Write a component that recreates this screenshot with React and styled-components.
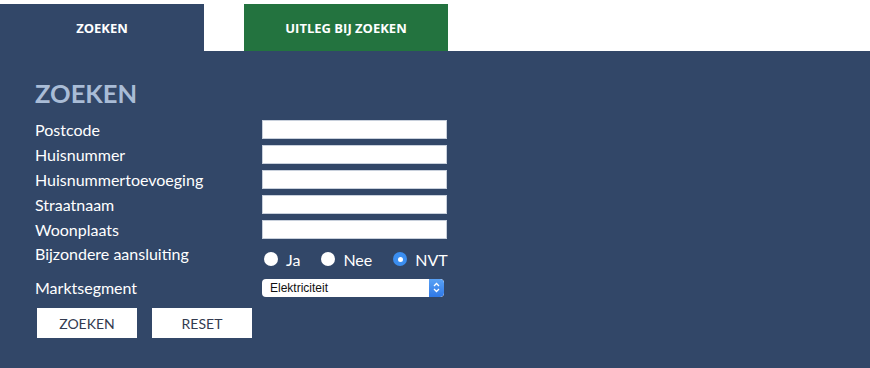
import React from "react";
import styled, { createGlobalStyle } from "styled-components";

const Global = createGlobalStyle`
  body {
    margin: 0;
    background: #fff;
    font-family: "Lato", "Open Sans", "Liberation Sans", sans-serif;
  }
`;

const Tabs = styled.div`
  display: flex;
  gap: 40px;
  margin-top: 4px;
`;

const Tab = styled.div`
  width: 204px;
  height: 47px;
  display: flex;
  align-items: center;
  justify-content: center;
  background: ${(p) => (p.active ? "#324768" : "#23733f")};
  color: #fff;
  font-family: "Open Sans", sans-serif;
  font-size: 13px;
  font-weight: 700;
`;

const Panel = styled.div`
  background: #324768;
  height: 317px;
  padding: 26px 0 0 35px;
  box-sizing: border-box;
`;

const Heading = styled.h1`
  margin: 0 0 8px;
  color: #a9bcd6;
  font-size: 25.5px;
  font-weight: 700;
  line-height: 32px;
`;

const Form = styled.div`
  display: grid;
  grid-template-columns: 227px 185px;
  grid-template-rows: repeat(5, 25px) 33px 25px;
  align-items: center;
  color: #fff;
  font-size: 16px;
`;

const Label = styled.div`
  line-height: 18px;
  align-self: ${(p) => (p.top ? "start" : "center")};
  margin-top: ${(p) => (p.top ? "3px" : "0")};
`;

const Input = styled.input`
  width: 185px;
  height: 19px;
  box-sizing: border-box;
  border: 1px solid #c8d0dc;
  background: #fff;
  padding: 0;
  margin: 0;
`;

const Radios = styled.div`
  display: flex;
  align-items: center;
  gap: 21px;
  padding: 1px 0 0 2px;
`;

const RadioItem = styled.label`
  display: flex;
  align-items: center;
  gap: 8px;
`;

const Dot = styled.span`
  width: 14px;
  height: 14px;
  border-radius: 50%;
  box-sizing: border-box;
  background: ${(p) => (p.checked ? "#3b8ef0" : "#fff")};
  display: flex;
  align-items: center;
  justify-content: center;
  &::after {
    content: "";
    width: 5px;
    height: 5px;
    border-radius: 50%;
    background: #fff;
    display: ${(p) => (p.checked ? "block" : "none")};
  }
`;

const SelectBox = styled.div`
  width: 182px;
  height: 18px;
  background: #fff;
  border-radius: 4px;
  display: flex;
  align-items: center;
  justify-content: space-between;
  color: #111;
  font-family: "Liberation Sans", Arial, sans-serif;
  font-size: 12px;
  padding-left: 8px;
  box-sizing: border-box;
  overflow: hidden;
`;

const Stepper = styled.span`
  width: 15px;
  height: 18px;
  background: linear-gradient(#5aa2f5, #2f78e6);
  border-radius: 0 4px 4px 0;
  display: flex;
  align-items: center;
  justify-content: center;
`;

const Buttons = styled.div`
  display: flex;
  gap: 15px;
  margin: 8px 0 0 2px;
`;

const Button = styled.button`
  width: 100px;
  height: 30px;
  border: none;
  background: #fff;
  color: #333b4f;
  font-family: "Lato", "Liberation Sans", sans-serif;
  font-size: 14px;
  font-weight: 400;
  padding: 0;
`;

const fields = [
  "Postcode",
  "Huisnummer",
  "Huisnummertoevoeging",
  "Straatnaam",
  "Woonplaats",
];

export default function App() {
  return (
    <>
      <Global />
      <Tabs>
        <Tab active>ZOEKEN</Tab>
        <Tab>UITLEG BIJ ZOEKEN</Tab>
      </Tabs>
      <Panel>
        <Heading>ZOEKEN</Heading>
        <Form>
          {fields.map((f) => (
            <React.Fragment key={f}>
              <Label>{f}</Label>
              <Input />
            </React.Fragment>
          ))}
          <Label top>Bijzondere aansluiting</Label>
          <Radios>
            <RadioItem>
              <Dot /> Ja
            </RadioItem>
            <RadioItem>
              <Dot /> Nee
            </RadioItem>
            <RadioItem>
              <Dot checked /> NVT
            </RadioItem>
          </Radios>
          <Label>Marktsegment</Label>
          <SelectBox>
            Elektriciteit
            <Stepper>
              <svg width="7" height="11" viewBox="0 0 7 11">
                <path d="M1 4 L3.5 1.5 L6 4 M1 7 L3.5 9.5 L6 7" stroke="#fff" strokeWidth="1.3" fill="none" />
              </svg>
            </Stepper>
          </SelectBox>
        </Form>
        <Buttons>
          <Button>ZOEKEN</Button>
          <Button>RESET</Button>
        </Buttons>
      </Panel>
    </>
  );
}
